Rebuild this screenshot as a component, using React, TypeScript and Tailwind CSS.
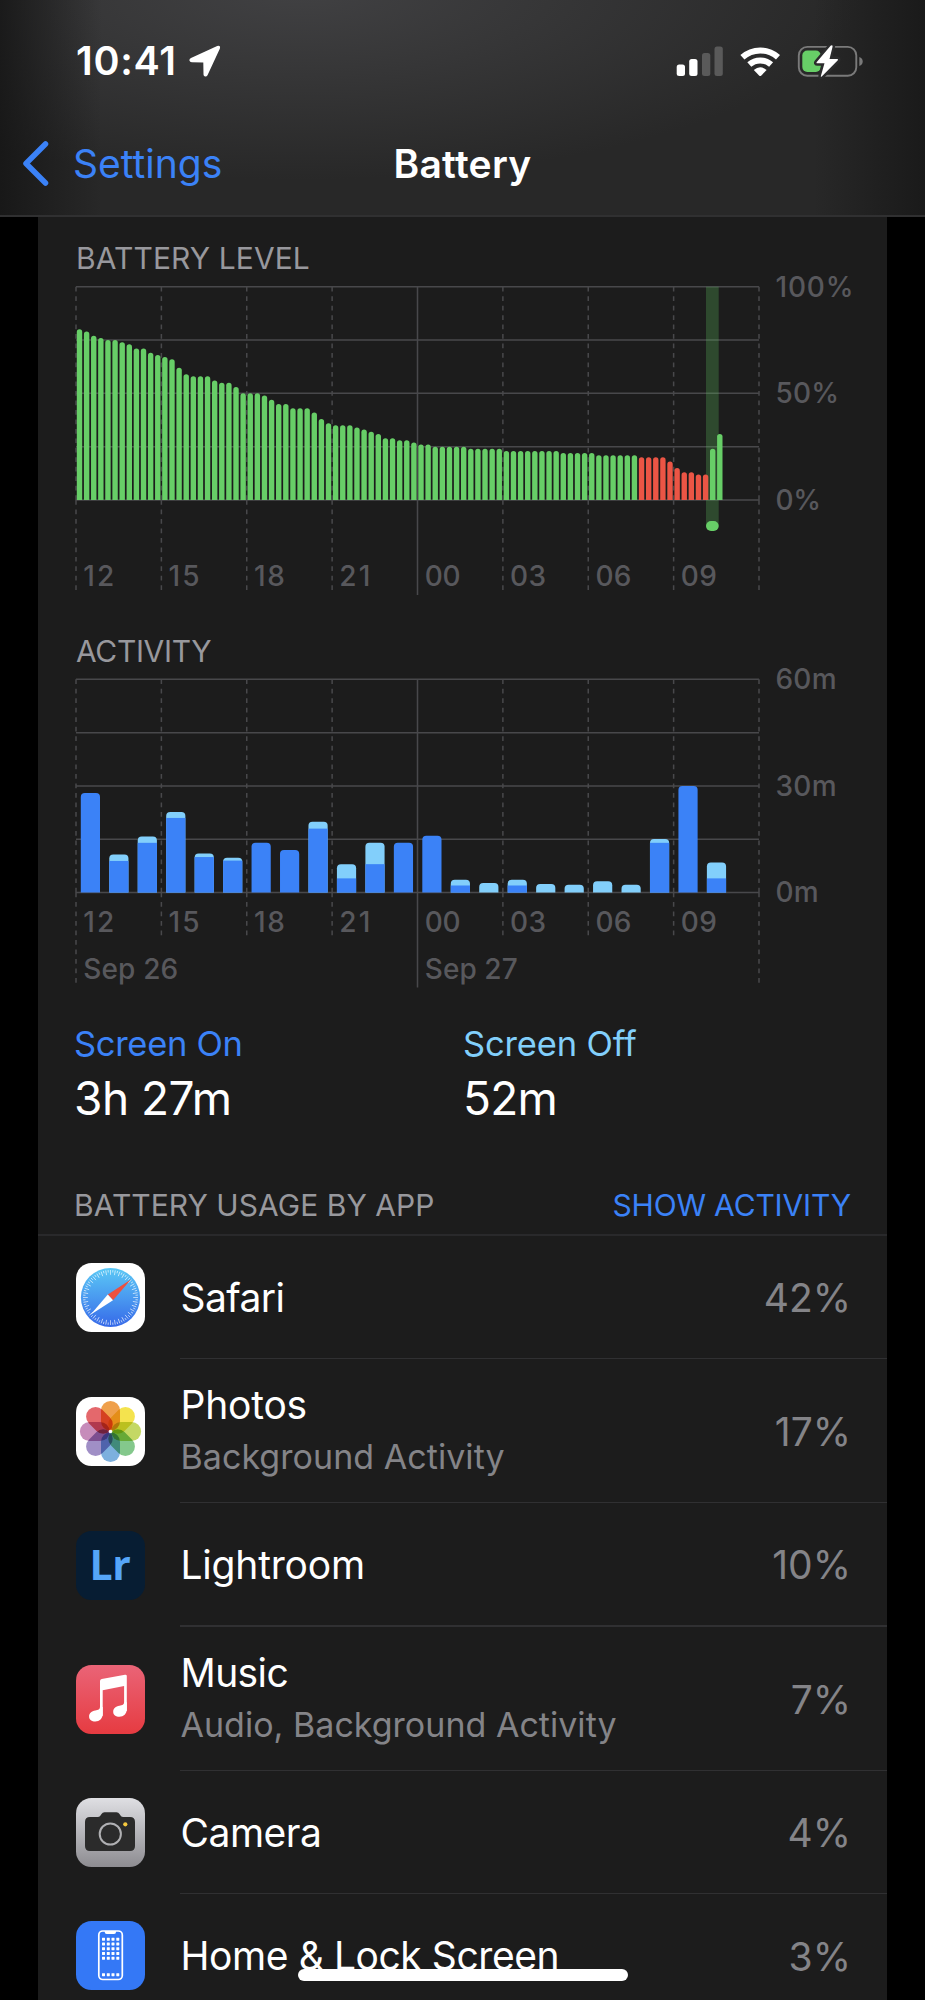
import React from "react";

interface AppUsage {
  name: string;
  detail?: string;
  percent: string;
  icon: React.ReactNode;
  nameClass: string;
  detailClass?: string;
  rowClass: string;
}

// Battery percentage, one sample every 15 minutes
const levels = [
  80, 79, 77, 76, 75, 75, 74, 73, 71, 71, 69, 68,
  67, 66, 62, 59, 58, 58, 58, 56, 55, 55, 53, 50,
  50, 50, 49, 47, 45, 45, 43, 43, 43, 41, 38, 36,
  35, 35, 35, 34, 33, 32, 31, 29, 29, 28, 28, 27,
  26, 26, 25, 25, 25, 25, 25, 24, 24, 24, 24, 24,
  23, 23, 23, 23, 23, 23, 23, 23, 22, 22, 22, 22,
  22, 21, 21, 21, 21, 21, 21, 20, 20, 20, 20, 18,
  15, 13, 13, 12, 12, 24, 31,
];

// [screen on, total] minutes per hour
const activity = [
  [28, 28], [8.9, 10.7], [14, 15.8], [21, 22.7], [10, 11], [9, 9.8],
  [14, 14], [12, 12], [18, 19.9], [4, 8], [8, 14], [14, 14],
  [16, 16], [2, 3.6], [0, 2.7], [2, 3.6], [0, 2.4], [0, 2.2],
  [0, 3.2], [0, 2.2], [14, 15.1], [30, 30], [4, 8.5],
];

const hours = ["12", "15", "18", "21", "00", "03", "06", "09"];

const LEFT = 38;
const RIGHT = 721;
const STEP = (RIGHT - LEFT) / 8;
const PLOT = 213.3;

interface GridProps {
  top: number;
  innerEnd: number;
  outerEnd: number;
  midEnd: number;
}

function Grid({ top, innerEnd, outerEnd, midEnd }: GridProps) {
  const base = top + PLOT;
  return (
    <g stroke="#48484b" strokeWidth="1.5">
      {[0, 1, 2, 3, 4].map((i) => (
        <line key={i} x1={LEFT} x2={RIGHT} y1={top + (i * PLOT) / 4} y2={top + (i * PLOT) / 4} />
      ))}
      {[0, 1, 2, 3, 4, 5, 6, 7, 8].map((i) => {
        const x = LEFT + i * STEP;
        if (i === 4) return <line key={i} x1={x} x2={x} y1={top} y2={midEnd} />;
        const end = i === 0 || i === 8 ? outerEnd : innerEnd;
        // The dash pattern starts again below the axis
        return (
          <path key={i} d={`M${x} ${top}V${base}M${x} ${base}V${end}`} strokeDasharray="4.74 4.74" />
        );
      })}
    </g>
  );
}

function ChartLabel({ x, y, width, children }: { x: number; y: number; width: number; children: string }) {
  return (
    <text x={x} y={y} textLength={width} fontSize="28" fontWeight="500" fill="#58585c">
      {children}
    </text>
  );
}

function LevelChart() {
  const top = 6.7;
  const base = top + PLOT;
  return (
    <svg width="849" height="320" className="block overflow-visible">
      <Grid top={top} innerEnd={310} outerEnd={310} midEnd={315} />
      <rect x="668" y={top} width="12.7" height="240" fill="#62d163" fillOpacity="0.25" />
      {levels.map((v, i) => {
        const x = LEFT + 0.8 + i * (STEP / 12);
        const y = base - (v / 100) * PLOT;
        return (
          <path
            key={i}
            d={`M${x} ${base}V${y + 2.7}a2.7 2.7 0 0 1 5.4 0V${base}z`}
            fill={i >= 79 && i <= 88 ? "#eb5545" : "#67ce67"}
          />
        );
      })}
      <rect x="668" y="241" width="12.7" height="10" rx="5" fill="#67ce67" />
      {hours.map((h, i) => (
        <ChartLabel key={h} x={LEFT + 7.2 + i * STEP} y={306.3} width={i < 4 ? 31 : 36}>{h}</ChartLabel>
      ))}
      <ChartLabel x={737.5} y={16.5} width={78}>100%</ChartLabel>
      <ChartLabel x={737.5} y={123} width={63.5}>50%</ChartLabel>
      <ChartLabel x={737.5} y={229.7} width={45.5}>0%</ChartLabel>
    </svg>
  );
}

function ActivityChart() {
  const top = 6.3;
  const base = top + PLOT;
  return (
    <svg width="849" height="327" className="block overflow-visible">
      <Grid top={top} innerEnd={262.3} outerEnd={310} midEnd={314.5} />
      {activity.map(([on, total], i) => {
        const x = LEFT + 4.8 + i * (STEP / 3);
        const y = base - (total / 60) * PLOT;
        const onHeight = (on / 60) * PLOT;
        return (
          <g key={i}>
            <path
              d={`M${x} ${base}V${y + 4}q0 -4 4 -4h11.2q4 0 4 4V${base}z`}
              fill={on === total ? "#3b82f7" : "#82cffb"}
            />
            {on !== total && on > 0 && (
              <rect x={x} y={base - onHeight} width="19.2" height={onHeight} fill="#3b82f7" />
            )}
          </g>
        );
      })}
      {hours.map((h, i) => (
        <ChartLabel key={h} x={LEFT + 7.2 + i * STEP} y={258.6} width={i < 4 ? 31 : 36}>{h}</ChartLabel>
      ))}
      <ChartLabel x={LEFT + 7.2} y={305.8} width={95}>Sep 26</ChartLabel>
      <ChartLabel x={LEFT + 7.2 + 4 * STEP} y={305.8} width={93}>Sep 27</ChartLabel>
      <ChartLabel x={737.5} y={16} width={61}>60m</ChartLabel>
      <ChartLabel x={737.5} y={122.5} width={61}>30m</ChartLabel>
      <ChartLabel x={737.5} y={229} width={43}>0m</ChartLabel>
    </svg>
  );
}

function SafariIcon() {
  return (
    <svg viewBox="0 0 69 69" className="size-[69px]">
      <defs>
        <linearGradient id="safari" x1="0" y1="0" x2="0" y2="1">
          <stop offset="0" stopColor="#5ac8f5" />
          <stop offset="0.5" stopColor="#4a9af0" />
          <stop offset="1" stopColor="#3568e8" />
        </linearGradient>
      </defs>
      <rect width="69" height="69" rx="15.5" fill="#fff" />
      <circle cx="34.5" cy="34.5" r="29.6" fill="url(#safari)" />
      {Array.from({ length: 72 }, (_, i) => (
        <line
          key={i}
          x1="34.5"
          x2="34.5"
          y1="7"
          y2={i % 2 ? 9.4 : 11.8}
          stroke="#fff"
          strokeOpacity="0.75"
          strokeWidth="0.8"
          transform={`rotate(${i * 5} 34.5 34.5)`}
        />
      ))}
      <path d="M54.9 16.5 L31.8 31.5 L37 37.2z" fill="#eb5040" />
      <path d="M14.5 51.8 L31.8 31.5 L37 37.2z" fill="#fff" />
    </svg>
  );
}

function PhotosIcon() {
  const petals = ["#efa04c", "#f4e34e", "#c4d864", "#84c88c", "#7db0de", "#a08fc6", "#c68cba", "#e4686c"];
  return (
    <svg viewBox="0 0 69 69" className="isolate size-[69px]">
      <rect width="69" height="69" rx="15.5" fill="#fff" />
      {petals.map((color, i) => (
        <rect
          key={color}
          x="25"
          y="3.9"
          width="19"
          height="29.8"
          rx="9.5"
          fill={color}
          transform={`rotate(${i * 45} 34.5 34.5)`}
          className="mix-blend-multiply"
        />
      ))}
      <circle cx="34.5" cy="34.5" r="1.8" fill="#fff" />
    </svg>
  );
}

function LightroomIcon() {
  return (
    <svg viewBox="0 0 69 69" className="size-[69px]">
      <rect width="69" height="69" rx="15.5" fill="#071d33" />
      <text x="13.4" y="49.1" fontSize="41" fontWeight="700" textLength="41.5" fill="#55a5f8" className="font-['Open_Sans',sans-serif]">
        Lr
      </text>
    </svg>
  );
}

function MusicIcon() {
  return (
    <svg viewBox="0 0 69 69" className="size-[69px]">
      <defs>
        <linearGradient id="music" x1="0" y1="0" x2="0" y2="1">
          <stop offset="0" stopColor="#ea6477" />
          <stop offset="1" stopColor="#e63b41" />
        </linearGradient>
      </defs>
      <rect width="69" height="69" rx="15.5" fill="url(#music)" />
      <g fill="#fff">
        <path d="M24 50V16q0-1.700 1.700-2L49 9.700q1.800-.3 1.800 1.400V46h-2.700V21L26.700 25.300V51z" />
        <path d="M26.700 49c0 4.500-3.200 7.500-7.400 7.500c-3.500 0-6.200-1.900-6.200-5.100c0-3.500 2.600-5.300 6.200-6c3-.6 4.700-.9 4.700-3.400h2.700z" />
        <path d="M50.800 44.300c0 4.500-3.200 7.500-7.400 7.500c-3.500 0-6.200-1.900-6.200-5.100c0-3.500 2.600-5.300 6.200-6c3-.6 4.700-.9 4.700-3.400h2.700z" />
      </g>
    </svg>
  );
}

function CameraIcon() {
  return (
    <svg viewBox="0 0 69 69" className="size-[69px]">
      <defs>
        <linearGradient id="camera" x1="0" y1="0" x2="0" y2="1">
          <stop offset="0" stopColor="#dfdfe3" />
          <stop offset="1" stopColor="#8d8c91" />
        </linearGradient>
      </defs>
      <rect width="69" height="69" rx="15.5" fill="url(#camera)" />
      <path
        d="M14 19h7.500q2 0 3-1.600l1-1.500q1-1.600 3-1.600h12q2 0 3 1.600l1 1.500q1 1.600 3 1.600H54q5 0 5 5v24q0 5-5 5H14q-5 0-5-5V24q0-5 5-5z"
        fill="#2b2b2b"
      />
      <circle cx="34.3" cy="36" r="10.6" fill="none" stroke="#b0b0b3" strokeWidth="2" />
      <circle cx="49.3" cy="26.3" r="2.1" fill="#f5c83e" />
    </svg>
  );
}

function HomeIcon() {
  return (
    <svg viewBox="0 0 69 69" className="size-[69px]">
      <rect width="69" height="69" rx="15.5" fill="#3478f6" />
      <rect x="22.8" y="10" width="23.5" height="48.5" rx="4" fill="none" stroke="#fff" strokeWidth="1.7" />
      <path d="M28.700 10h11.300v1q0 2-2 2h-7.300q-2 0-2-2z" fill="#fff" />
      {[18.2, 23, 27.7, 32.4, 37.2, 53.7].map((y) =>
        [27.5, 32.3, 37, 41.8].map((x) => (
          <rect key={`${x}-${y}`} x={x - 1.5} y={y - 1.5} width="3" height="3" rx="0.4" fill="#fff" />
        ))
      )}
    </svg>
  );
}

const apps: AppUsage[] = [
  { name: "Safari", percent: "42%", icon: <SafariIcon />, nameClass: "tracking-[-0.6px]", rowClass: "h-[123px] border-b" },
  {
    name: "Photos",
    detail: "Background Activity",
    percent: "17%",
    icon: <PhotosIcon />,
    nameClass: "tracking-[-0.2px]",
    detailClass: "tracking-[0.05px]",
    rowClass: "h-[144px] border-b",
  },
  { name: "Lightroom", percent: "10%", icon: <LightroomIcon />, nameClass: "tracking-[-0.2px]", rowClass: "h-[124px] border-b-2" },
  {
    name: "Music",
    detail: "Audio, Background Activity",
    percent: "7%",
    icon: <MusicIcon />,
    nameClass: "tracking-[-0.6px]",
    detailClass: "tracking-[0.02px]",
    rowClass: "h-[144px] border-b",
  },
  { name: "Camera", percent: "4%", icon: <CameraIcon />, nameClass: "tracking-[-0.5px]", rowClass: "h-[123px] border-b" },
  { name: "Home & Lock Screen", percent: "3%", icon: <HomeIcon />, nameClass: "tracking-[-0.42px]", rowClass: "h-[123px]" },
];

function AppRow({ app }: { app: AppUsage }) {
  return (
    <li className="flex pl-[38px]">
      <div className="flex w-[104px] shrink-0 items-center">{app.icon}</div>
      <div className={`flex flex-1 items-center justify-between border-[#303032] pr-[36px] ${app.rowClass}`}>
        <div className="pt-px pl-[0.5px] whitespace-nowrap">
          <div className={`text-[39px] leading-[52px] text-white ${app.nameClass}`}>{app.name}</div>
          {app.detail && (
            <div className={`text-[34px] leading-[52px] text-[#848488] ${app.detailClass}`}>{app.detail}</div>
          )}
        </div>
        <div className="pt-[2px] text-[39px] leading-[52px] text-[#848488]">{app.percent}</div>
      </div>
    </li>
  );
}

function StatusIcons() {
  return (
    <svg width="190" height="34" viewBox="675 45 190 34">
      <rect x="676.7" y="64.5" width="8.3" height="11.5" rx="2.5" fill="#fff" />
      <rect x="689.2" y="59" width="8.3" height="17" rx="2.5" fill="#fff" />
      <rect x="702" y="53" width="8.3" height="23" rx="2.5" fill="#5a5a5a" />
      <rect x="714.5" y="46.5" width="8.3" height="29.5" rx="2.5" fill="#5a5a5a" />
      {/* Wifi */}
      <g fill="none" stroke="#fff" strokeWidth="6">
        <path d="M742.400 57.300a26.500 26.500 0 0 1 35.600 0" />
        <path d="M749.300 64.500a16.500 16.500 0 0 1 21.800 0" />
      </g>
      <path d="M753.800 70q6.400-5.500 12.800 0l-5.500 5.700q-.9.800-1.800 0z" fill="#fff" />
      {/* Battery */}
      <rect x="798.8" y="46.9" width="57.5" height="28.8" rx="8.5" fill="none" stroke="#7a7a7a" strokeWidth="1.9" />
      <path d="M859.300 57v9q3.400-1.300 3.400-4.500t-3.400-4.500z" fill="#7a7a7a" />
      <rect x="802.3" y="50.5" width="18.5" height="21.5" rx="5" fill="#67ce67" />
      <path
        d="M830.600 45.800L816.800 62q-1 1.300.7 1.300h7L821 75.500q-.6 2.300 1 .7L837.600 60.500q1.200-1.400-.6-1.400H829.500L832.500 47q.4-2.500-1.900-1.200z"
        fill="#fff"
        stroke="#2c2c2d"
        strokeWidth="5"
        paintOrder="stroke"
      />
    </svg>
  );
}

export default function App() {
  return (
    <div className="relative h-[2000px] w-[925px] overflow-hidden bg-black font-[Inter,sans-serif] text-white">
      <header className="h-[217px] border-b-2 border-[#303031] bg-[linear-gradient(90deg,rgba(20,20,20,0.8)_0%,rgba(28,28,28,0)_11%,rgba(28,28,28,0)_88%,rgba(20,20,20,0.7)_100%),radial-gradient(ellipse_560px_190px_at_300px_-10px,#414143_0%,#363637_45%,#282828_100%)]">
        <div className="flex h-[123px] items-center justify-between pr-[60px] pl-[76px]">
          <div className="flex items-center gap-[12px]">
            <span className="text-[39.5px] font-semibold tracking-[0.7px]">10:41</span>
            <svg width="32" height="33" viewBox="0 0 32 33">
              <path
                d="M30.800 3.800L18.500 30.300Q17.500 32 16 31.500Q14.500 31 14.500 29.500L14.300 17.500L2.800 17.300Q.8 17.300.4 15.500Q.2 13.900 2 13L28.200 1Q30 .3 30.800 1.300Q31.400 2.300 30.800 3.800z"
                fill="#fff"
              />
            </svg>
          </div>
          <StatusIcons />
        </div>
        <nav className="grid h-[82px] grid-cols-[1fr_auto_1fr] items-center text-[39px]">
          <a className="flex items-center gap-[23px] pl-[21px] text-[#3b82f7]">
            <svg width="28" height="46" viewBox="0 0 28 46">
              <path d="M24.500 3L5 22.500L24.500 42" fill="none" stroke="currentColor" strokeWidth="5.5" strokeLinecap="round" strokeLinejoin="round" />
            </svg>
            <span className="pl-px pt-px">Settings</span>
          </a>
          <h1 className="pt-px font-semibold tracking-[0.3px]">Battery</h1>
        </nav>
      </header>

      <main className="mx-[38px] bg-[#1c1c1c] pt-[19px]">
        <h2 className="pl-[38px] text-[30px] leading-[44px] tracking-[0.1px] text-[#98989d]">BATTERY LEVEL</h2>
        <LevelChart />
        <h2 className="mt-[30px] pl-[38px] text-[30px] leading-[43px] tracking-[-0.35px] text-[#98989d]">ACTIVITY</h2>
        <ActivityChart />

        <div className="grid grid-cols-[389px_1fr] pt-[21px] pl-[36px]">
          <div>
            <div className="text-[34.5px] leading-[45px] tracking-[-0.3px] text-[#3b82f7]">Screen On</div>
            <div className="mt-[5px] text-[46px] leading-[54px] tracking-[-0.5px]">3h 27m</div>
          </div>
          <div>
            <div className="text-[34.5px] leading-[45px] tracking-[-0.15px] text-[#82cffb]">Screen Off</div>
            <div className="mt-[5px] text-[46px] leading-[54px] tracking-[-0.7px]">52m</div>
          </div>
        </div>

        <div className="mt-[50px] flex h-[61px] items-center justify-between border-b-2 border-[#29292b] pt-px pr-[36px] pl-[36px] text-[30px]">
          <h2 className="tracking-[0.05px] text-[#98989d]">BATTERY USAGE BY APP</h2>
          <button className="tracking-[-0.15px] text-[#3b82f7]">SHOW ACTIVITY</button>
        </div>

        <ul>
          {apps.map((app) => (
            <AppRow key={app.name} app={app} />
          ))}
        </ul>
      </main>

      {/* Home indicator */}
      <div className="absolute top-[1969px] left-[298px] h-[12px] w-[330px] rounded-full bg-white" />
    </div>
  );
}
